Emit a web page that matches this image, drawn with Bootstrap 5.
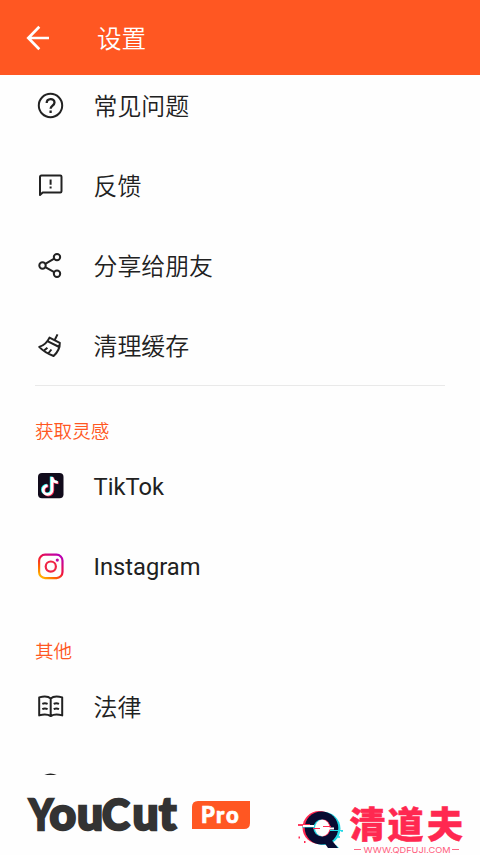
<!DOCTYPE html>
<html lang="zh-CN">
<head>
<meta charset="utf-8">
<meta name="viewport" content="width=device-width, initial-scale=1">
<title>设置</title>
<link href="https://cdn.jsdelivr.net/npm/bootstrap@5.3.0/dist/css/bootstrap.min.css" rel="stylesheet">
<style>
  body { font-family: Roboto, "Noto Sans CJK SC", sans-serif; color: #212121; background: #fefefe; }
  .app { height: 855px; }
  .app-bar { height: 75px; background: #ff5722; padding: 0 26px 0 25px; }
  .app-title { font-size: 24.6px; line-height: 36px; margin-left: 46px; padding-top: 4px; font-weight: 350; }
  .settings { height: 700px; }
  .group { display: grid; gap: 20.3px; }
  .item { height: 60px; padding-left: 36px; font-size: 23.9px; line-height: 36px; color: #212121; }
  .item svg { width: 29px; height: 29px; flex: none; margin-right: 28.5px; }
  .item svg.line-icon { fill: none; stroke: #222; stroke-width: 2; stroke-linejoin: round; }
  .label-cn { padding-top: 3px; font-weight: 350; }
  .label-latin { padding-top: 2px; font-size: 23.7px; }
  .rule { height: 1.5px; margin: 9px 35px 0; background: #e9e9e9; }
  .group-title { font-size: 18.6px; line-height: 28px; color: #ff5722; padding-left: 35px; font-weight: 350; }
  .group-title.inspire { margin: 31.5px 0 10px; }
  .group-title.other { margin: 42px 0 10px; }
  .brand-bar { height: 80px; padding: 0 17px 0 26px; }
</style>
</head>
<body>
<div class="app d-flex flex-column overflow-hidden">
  <header class="app-bar d-flex align-items-center text-white flex-shrink-0">
    <svg width="26" height="28" viewBox="0 0 26 28" fill="none" stroke="#fff" stroke-width="2.7" aria-hidden="true"><path d="M24 14H3.5M14.3 2.8 3.3 14l11 11.2"/></svg>
    <h1 class="app-title mb-0">设置</h1>
  </header>

  <main class="settings overflow-hidden flex-shrink-0">
    <div class="group">
      <div class="item d-flex align-items-center">
        <svg class="line-icon" viewBox="0 0 29 29"><circle cx="14.5" cy="14.5" r="11.7"/><path stroke-width="2.3" d="M10.7 12c0-5 7.8-5.2 7.8-.5 0 3-3.9 3.1-3.9 6.2M14.6 19.5v2.6"/></svg>
        <span class="label-cn">常见问题</span>
      </div>
      <div class="item d-flex align-items-center">
        <svg class="line-icon" viewBox="0 0 29 29"><path d="M4 24V6q0-1.5 1.5-1.5h18.8q1.2 0 1.2 1.2v14.6q0 1.2-1.2 1.2H6.7z"/><path d="M14.6 8.5v5.2M14.6 15.4v2.2"/></svg>
        <span class="label-cn">反馈</span>
      </div>
      <div class="item d-flex align-items-center">
        <svg class="line-icon" viewBox="0 0 29 29"><circle cx="6.5" cy="14.5" r="3.2"/><circle cx="21" cy="6.1" r="3.2"/><circle cx="21" cy="22.7" r="3.2"/><path d="m9.3 12.9 8.9-5.2M9.3 16.1l8.9 5"/></svg>
        <span class="label-cn">分享给朋友</span>
      </div>
      <div class="item d-flex align-items-center">
        <svg class="line-icon" viewBox="0 0 29 29"><path d="m18.6 9.2 2.9-5.8M13.5 6.6l10.3 5.2c.2 5.1-2 9.4-6.2 13.2C12.5 23.1 7.5 20.5 3.2 15.9c4.7-1.4 8-4.4 10.3-9.3zM11.9 10.3l11.3 5.7M8.4 19.2l3-2.5M12.6 22l2.800-3.500"/></svg>
        <span class="label-cn">清理缓存</span>
      </div>
    </div>
    <div class="rule"></div>

    <h2 class="group-title inspire">获取灵感</h2>
    <div class="group">
      <div class="item d-flex align-items-center">
        <svg viewBox="0 0 29 29"><rect x="2" y="2" width="25.5" height="25.2" rx="4" fill="#110b1b"/><g fill="none" stroke-width="2.8"><path stroke="#25f4ee" d="M15.2 5.5v13a4.4 4.4 0 1 1-4.4-4.4M15.2 5.5c.3 3.6 2.6 5.2 5.8 5.3"/><path stroke="#fe2c55" d="M16.8 6.6v13a4.4 4.4 0 1 1-4.4-4.4M16.8 6.6c.3 3.6 2.6 5.2 5.8 5.3"/><path stroke="#fff" d="M16 6v13a4.4 4.4 0 1 1-4.4-4.4M16 6c.3 3.6 2.6 5.2 5.8 5.3"/></g></svg>
        <span class="label-latin">TikTok</span>
      </div>
      <div class="item d-flex align-items-center">
        <svg viewBox="0 0 29 29"><defs><linearGradient id="ig" x1=".1" y1="1" x2=".85" y2="0"><stop stop-color="#ffbd00"/><stop offset=".25" stop-color="#ff6b00"/><stop offset=".55" stop-color="#f0123f"/><stop offset="1" stop-color="#b900b4"/></linearGradient></defs><rect x="3.1" y="2.7" width="23.4" height="23.4" rx="6" fill="none" stroke="url(#ig)" stroke-width="2.2"/><circle cx="14.8" cy="14.6" r="5.1" fill="none" stroke="#ef2444" stroke-width="2.2"/><circle cx="21.3" cy="8.1" r="1.6" fill="#c30aa0"/></svg>
        <span class="label-latin">Instagram</span>
      </div>
    </div>

    <h2 class="group-title other">其他</h2>
    <div class="group">
      <div class="item d-flex align-items-center">
        <svg class="line-icon" viewBox="0 0 29 29"><path d="M14.7 6.5C12.4 4.4 8 4.2 3.2 5.4v18c4.5-1.2 8.8-1 11.5.7 2.7-1.7 7-1.9 11.5-.7v-18c-4.8-1.2-9.2-1-11.5 1.1zM14.7 6.5v17.4M6.3 11.9q2.6-1.2 5.3 0M6.3 17.1q2.6-1.2 5.3 0M17.7 11.9q2.6-1.2 5.3 0M17.7 17.1q2.6-1.2 5.3 0"/></svg>
        <span class="label-cn">法律</span>
      </div>
      <div class="item d-flex align-items-center">
        <svg class="line-icon" viewBox="0 0 29 29"><circle cx="14.5" cy="14.5" r="12"/></svg>
      </div>
    </div>
  </main>

  <footer class="brand-bar d-flex justify-content-between flex-shrink-0">
    <svg width="226" height="80" viewBox="26 775 226 80" role="img" aria-label="YouCut Pro">
      <g font-family="Lato, sans-serif" font-weight="900" fill="#333" stroke="#333" stroke-width="2.4">
        <text x="29" y="830" font-size="42" textLength="24" lengthAdjust="spacingAndGlyphs">Y</text>
        <text y="830" font-size="46"><tspan x="49.5 77">ou</tspan><tspan x="102" font-size="42">C</tspan><tspan x="132.500 159">ut</tspan></text>
      </g>
      <path d="M192 829v-22q0-6 6-6h52v22q0 6-6 6z" fill="#ff5722"/>
      <text x="201 216 226" y="822.500" font-family="Lato, sans-serif" font-weight="900" font-size="22" fill="#fff" stroke="#fff" stroke-width=".7">Pro</text>
    </svg>
    <svg width="166" height="80" viewBox="297 775 166 80" role="img" aria-label="清道夫">
      <ellipse cx="319.300" cy="827.6" rx="16.8" ry="16.5" fill="#ff2850"/>
      <ellipse cx="323.700" cy="828.6" rx="16.8" ry="16.5" fill="#20d8e5"/>
      <ellipse cx="321.500" cy="828" rx="16.8" ry="16.5" fill="#080c32"/>
      <path d="M330 848h9l-3-3z" fill="#20d8e5"/>
      <path d="M321 838h9l8 10h-10z" fill="#080c32"/>
      <ellipse cx="321.700" cy="828" rx="8.300" ry="8.500" fill="#20d8e5"/>
      <ellipse cx="323" cy="828" rx="7.500" ry="8.500" fill="#ff2850"/>
      <ellipse cx="322.300" cy="828" rx="7.300" ry="8.200" fill="#fefefe"/>
      <path d="M298 825h12" stroke="#ff2850" stroke-width="1.800"/>
      <path d="M302 827h12M330 830.500h13" stroke="#20d8e5" stroke-width="1.200"/>
      <path d="M303 826h11M322 828.500h12" stroke="#fff" stroke-width="1.800"/>
      <path d="M313 828.500h7M323 826.500h8" stroke="#ff2850" stroke-width="1.200"/>
      <path d="M298.500 837.500h1.500M304 842h1.500" stroke="#ff2850" stroke-width="2"/>
      <path d="M338 837h2M341 831h2" stroke="#20d8e5" stroke-width="1.500"/>
      <text x="349.500 387.500 427" y="838" font-family="'Noto Sans CJK SC', sans-serif" font-weight="900" font-size="36" fill="#ff2850" stroke="#ff2850" stroke-width=".5">清道夫</text>
      <path d="M354 849.500h7M452 849.500h7" stroke="#ff6682" stroke-width="1"/>
      <text x="363.500" y="852.700" font-family="Inter, sans-serif" font-size="8.200" fill="#ff5c7d" textLength="87" lengthAdjust="spacingAndGlyphs">WWW.QDFUJI.COM</text>
    </svg>
  </footer>
</div>
<script src="https://cdn.jsdelivr.net/npm/bootstrap@5.3.0/dist/js/bootstrap.bundle.min.js"></script>
</body>
</html>
